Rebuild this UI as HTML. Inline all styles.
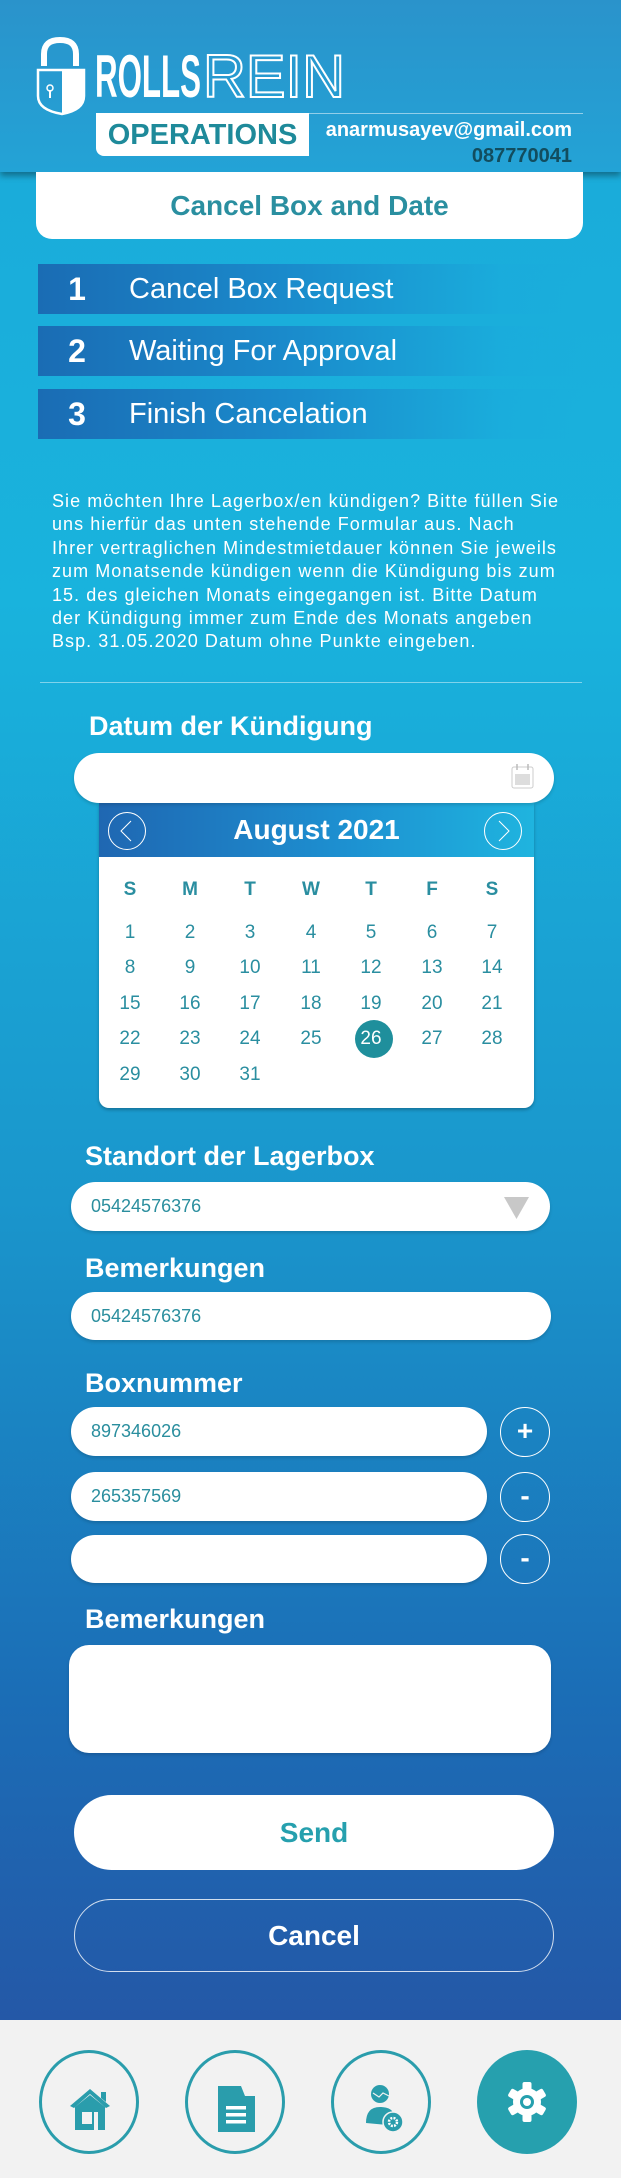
<!DOCTYPE html>
<html><head><meta charset="utf-8">
<style>
*{margin:0;padding:0;box-sizing:border-box}
body{width:621px;height:2178px;position:relative;overflow:hidden;font-family:"Liberation Sans",sans-serif;
background:linear-gradient(180deg,#1ba9d9 0px,#19b3dd 600px,#1a96cc 1200px,#1b6db6 1700px,#2458a7 2020px);}
.abs{position:absolute}
.hdr{left:0;top:0;width:621px;height:172px;background:linear-gradient(180deg,#2a93cb,#23a3d6);box-shadow:0 4px 6px rgba(0,0,0,.35)}
.card{left:36px;top:172px;width:547px;height:67px;background:#fff;border-radius:0 0 16px 16px;text-align:center;font-weight:bold;font-size:28px;color:#2a8fa0;line-height:67px}
.step{left:38px;width:545px;height:50px;background:linear-gradient(90deg,#1a6cb4 0%,#1a8acb 45%,rgba(27,170,220,.5) 85%,rgba(27,170,220,0) 100%);color:#fff;font-size:29px;line-height:50px}
.step .n{position:absolute;left:28px;width:22px;text-align:center;font-weight:bold;font-size:32px}
.step .t{position:absolute;left:91px}
.para{left:52px;top:490px;width:570px;color:#fff;font-size:18px;line-height:23.4px;white-space:nowrap;letter-spacing:1.05px}
.lbl{color:#fff;font-weight:bold;font-size:27px}
.inp{background:#fff;border-radius:26px;box-shadow:0 2px 3px rgba(0,0,0,.15);color:#2a8e9e;font-size:18px;padding-left:20px}
.cal{left:99px;top:803px;width:435px;height:305px;background:#fff;border-radius:0 0 10px 10px;box-shadow:0 2px 3px rgba(0,0,0,.25)}
.calh{position:absolute;left:0;top:0;width:435px;height:54px;background:linear-gradient(90deg,#1f67b2,#1d8fd0 55%,#1fb4df);color:#fff;font-weight:bold;font-size:28px;text-align:center;line-height:54px}
.g{position:absolute;width:40px;text-align:center;color:#2a8ea0;font-size:19px;transform:translate(-20px,-50%)}
.btnc{width:50px;height:50px;border:1.5px solid #fff;border-radius:50%;color:#fff;text-align:center;line-height:46px;font-weight:bold;font-size:28px}
.nav{left:0;top:2020px;width:621px;height:158px;background:#f2f2f2}
.ni{position:absolute;top:2050px;width:100px;height:104px;border:3px solid #2a9dac;border-radius:50%}
</style></head><body>
<div class="abs hdr"></div>
<svg class="abs" style="left:30px;top:36px" width="330" height="80" viewBox="0 0 330 80">
<path d="M14 30 V18 Q14 4 30 4 Q46 4 46 18 V30" fill="none" stroke="#fff" stroke-width="6"/>
<path d="M8 34 L54 34 L54 60 Q54 74 32 78 Q8 74 8 60 Z" fill="none" stroke="#fff" stroke-width="2.5"/>
<path d="M32 34 L54 34 L54 60 Q54 74 32 78 Z" fill="#fff"/>
<circle cx="20" cy="52" r="3" fill="none" stroke="#fff" stroke-width="1.5"/>
<rect x="19" y="54" width="2" height="8" fill="#fff"/>
<text x="65" y="61" font-family="Liberation Sans" font-weight="bold" font-size="60" fill="#fff" textLength="106" lengthAdjust="spacingAndGlyphs">ROLLS</text>
<text x="173" y="61" font-family="Liberation Sans" font-size="60" fill="none" stroke="#fff" stroke-width="2" textLength="142" lengthAdjust="spacingAndGlyphs">REIN</text>
</svg>
<div class="abs" style="left:308px;top:113px;width:275px;height:1px;background:rgba(255,255,255,.5)"></div>
<div class="abs" style="left:96px;top:113px;width:213px;height:43px;background:#fff;border-radius:0 0 0 8px;color:#1e8a9a;font-weight:bold;font-size:29px;line-height:45px;text-align:center">OPERATIONS</div>
<div class="abs" style="left:300px;top:119px;width:272px;text-align:right;color:#fff;font-weight:bold;font-size:20px">anarmusayev@gmail.com</div>
<div class="abs" style="left:300px;top:145px;width:272px;text-align:right;color:#124d5e;font-weight:bold;font-size:20px">087770041</div>
<div class="abs card">Cancel Box and Date</div>
<div class="abs step" style="top:264px"><span class="n">1</span><span class="t">Cancel Box Request</span></div>
<div class="abs step" style="top:326px"><span class="n">2</span><span class="t">Waiting For Approval</span></div>
<div class="abs step" style="top:389px"><span class="n">3</span><span class="t">Finish Cancelation</span></div>
<div class="abs para">Sie möchten Ihre Lagerbox/en kündigen? Bitte füllen Sie<br>uns hierfür das unten stehende Formular aus. Nach<br>Ihrer vertraglichen Mindestmietdauer können Sie jeweils<br>zum Monatsende kündigen wenn die Kündigung bis zum<br>15. des gleichen Monats eingegangen ist. Bitte Datum<br>der Kündigung immer zum Ende des Monats angeben<br>Bsp. 31.05.2020 Datum ohne Punkte eingeben.</div>
<div class="abs" style="left:40px;top:682px;width:542px;height:1px;background:rgba(255,255,255,.45)"></div>
<div class="abs lbl" style="left:89px;top:711px">Datum der Kündigung</div>
<div class="abs cal"><div class="calh">August 2021</div>
<svg class="abs" style="left:8px;top:8px" width="40" height="40"><circle cx="20" cy="20" r="18.5" fill="none" stroke="#fff"/><path d="M24 10 L14 20 L24 30" fill="none" stroke="#fff"/></svg>
<svg class="abs" style="left:384px;top:8px" width="40" height="40"><circle cx="20" cy="20" r="18.5" fill="none" stroke="#fff"/><path d="M16 10 L26 20 L16 30" fill="none" stroke="#fff"/></svg>
</div>
<div class="abs inp" style="left:74px;top:753px;width:480px;height:50px"></div>
<svg class="abs" style="left:511px;top:763px" width="23" height="26" viewBox="0 0 23 26"><rect x="1" y="4" width="21" height="21" rx="2" fill="#fff" stroke="#ccc"/><rect x="4" y="11" width="15" height="11" fill="#ddd"/><path d="M6 1v6M17 1v6" stroke="#bbb" stroke-width="1.5"/></svg>
<div class="abs lbl" style="left:85px;top:1141px">Standort der Lagerbox</div>
<div class="abs inp" style="left:71px;top:1182px;width:479px;height:49px;line-height:49px">05424576376</div>
<svg class="abs" style="left:504px;top:1197px" width="25" height="22"><path d="M0 0H25L12.5 22Z" fill="#c8c8c8"/></svg>
<div class="abs lbl" style="left:85px;top:1253px">Bemerkungen</div>
<div class="abs inp" style="left:71px;top:1292px;width:480px;height:48px;line-height:48px">05424576376</div>
<div class="abs lbl" style="left:85px;top:1368px">Boxnummer</div>
<div class="abs inp" style="left:71px;top:1407px;width:416px;height:49px;line-height:49px">897346026</div>
<div class="abs inp" style="left:71px;top:1472px;width:416px;height:49px;line-height:49px">265357569</div>
<div class="abs inp" style="left:71px;top:1535px;width:416px;height:48px"></div>
<div class="abs btnc" style="left:500px;top:1407px">+</div>
<div class="abs btnc" style="left:500px;top:1472px">-</div>
<div class="abs btnc" style="left:500px;top:1534px">-</div>
<div class="abs lbl" style="left:85px;top:1604px">Bemerkungen</div>
<div class="abs inp" style="left:69px;top:1645px;width:482px;height:108px;border-radius:20px"></div>
<div class="abs" style="left:74px;top:1795px;width:480px;height:75px;background:#fff;border-radius:38px;text-align:center;line-height:75px;color:#26a0ae;font-weight:bold;font-size:28px">Send</div>
<div class="abs" style="left:74px;top:1899px;width:480px;height:73px;border:1px solid rgba(255,255,255,.8);border-radius:37px;text-align:center;line-height:71px;color:#fff;font-weight:bold;font-size:28px">Cancel</div>
<div class="abs nav"></div>
<div class="ni" style="left:39px"><svg style="position:absolute;left:26px;top:33px" width="44" height="44" viewBox="0 0 44 44"><path d="M2 20 L22 3 L42 20 L38 22 L22 8 L6 22Z" fill="#2a9dac"/><path d="M33 6h5v10l-5-4z" fill="#2a9dac"/><path d="M7 21 L22 9 L37 21 V46 H7Z M14 26 V38 H24 V26Z" fill="#2a9dac" fill-rule="evenodd"/><rect x="26" y="26" width="4" height="20" fill="#f2f2f2"/></svg></div>
<div class="ni" style="left:185px"><svg style="position:absolute;left:29px;top:33px" width="40" height="46" viewBox="0 0 40 46"><path d="M1 0H24L28 10H38V46H1Z" fill="#2a9dac"/><rect x="9" y="20" width="20" height="3.5" fill="#fff"/><rect x="9" y="27" width="20" height="3.5" fill="#fff"/><rect x="9" y="34" width="20" height="3.5" fill="#fff"/></svg></div>
<div class="ni" style="left:331px"><svg style="position:absolute;left:32px;top:32px" width="40" height="48" viewBox="0 0 40 48"><circle cx="14" cy="9" r="9" fill="#2a9dac"/><path d="M7 8l6 4 4-4 6 3" stroke="#f2f2f2" stroke-width="1.2" fill="none"/><path d="M0 38 Q0 22 14 22 Q26 22 28 30 L22 40 Z" fill="#2a9dac"/><circle cx="27" cy="37" r="10" fill="#2a9dac" stroke="#f2f2f2" stroke-width="1.5"/><circle cx="27" cy="37" r="4" fill="none" stroke="#fff" stroke-width="2.5" stroke-dasharray="2 1.2"/></svg></div>
<div class="abs" style="left:477px;top:2050px;width:100px;height:104px;border-radius:50%;background:#26a0ae"><svg style="position:absolute;left:30px;top:32px" width="40" height="40" viewBox="-20 -20 40 40"><g fill="#fff"><circle r="14"/><rect x="-4.5" y="-20" width="9" height="40" rx="2"/><rect x="-4.5" y="-20" width="9" height="40" rx="2" transform="rotate(60)"/><rect x="-4.5" y="-20" width="9" height="40" rx="2" transform="rotate(120)"/></g><circle r="7" fill="#26a0ae"/><circle r="4" fill="#fff"/></svg></div>
<div class="abs g" style="left:130px;top:890px;font-weight:bold">S</div>
<div class="abs g" style="left:190px;top:890px;font-weight:bold">M</div>
<div class="abs g" style="left:250px;top:890px;font-weight:bold">T</div>
<div class="abs g" style="left:311px;top:890px;font-weight:bold">W</div>
<div class="abs g" style="left:371px;top:890px;font-weight:bold">T</div>
<div class="abs g" style="left:432px;top:890px;font-weight:bold">F</div>
<div class="abs g" style="left:492px;top:890px;font-weight:bold">S</div>
<div class="abs" style="left:355px;top:1020px;width:38px;height:38px;border-radius:50%;background:#1f8f9c"></div>
<div class="abs g" style="left:130px;top:933px">1</div><div class="abs g" style="left:190px;top:933px">2</div><div class="abs g" style="left:250px;top:933px">3</div><div class="abs g" style="left:311px;top:933px">4</div><div class="abs g" style="left:371px;top:933px">5</div><div class="abs g" style="left:432px;top:933px">6</div><div class="abs g" style="left:492px;top:933px">7</div>
<div class="abs g" style="left:130px;top:968px">8</div><div class="abs g" style="left:190px;top:968px">9</div><div class="abs g" style="left:250px;top:968px">10</div><div class="abs g" style="left:311px;top:968px">11</div><div class="abs g" style="left:371px;top:968px">12</div><div class="abs g" style="left:432px;top:968px">13</div><div class="abs g" style="left:492px;top:968px">14</div>
<div class="abs g" style="left:130px;top:1004px">15</div><div class="abs g" style="left:190px;top:1004px">16</div><div class="abs g" style="left:250px;top:1004px">17</div><div class="abs g" style="left:311px;top:1004px">18</div><div class="abs g" style="left:371px;top:1004px">19</div><div class="abs g" style="left:432px;top:1004px">20</div><div class="abs g" style="left:492px;top:1004px">21</div>
<div class="abs g" style="left:130px;top:1039px">22</div><div class="abs g" style="left:190px;top:1039px">23</div><div class="abs g" style="left:250px;top:1039px">24</div><div class="abs g" style="left:311px;top:1039px">25</div><div class="abs g" style="left:371px;top:1039px;color:#fff">26</div><div class="abs g" style="left:432px;top:1039px">27</div><div class="abs g" style="left:492px;top:1039px">28</div>
<div class="abs g" style="left:130px;top:1075px">29</div><div class="abs g" style="left:190px;top:1075px">30</div><div class="abs g" style="left:250px;top:1075px">31</div>
</body></html>
